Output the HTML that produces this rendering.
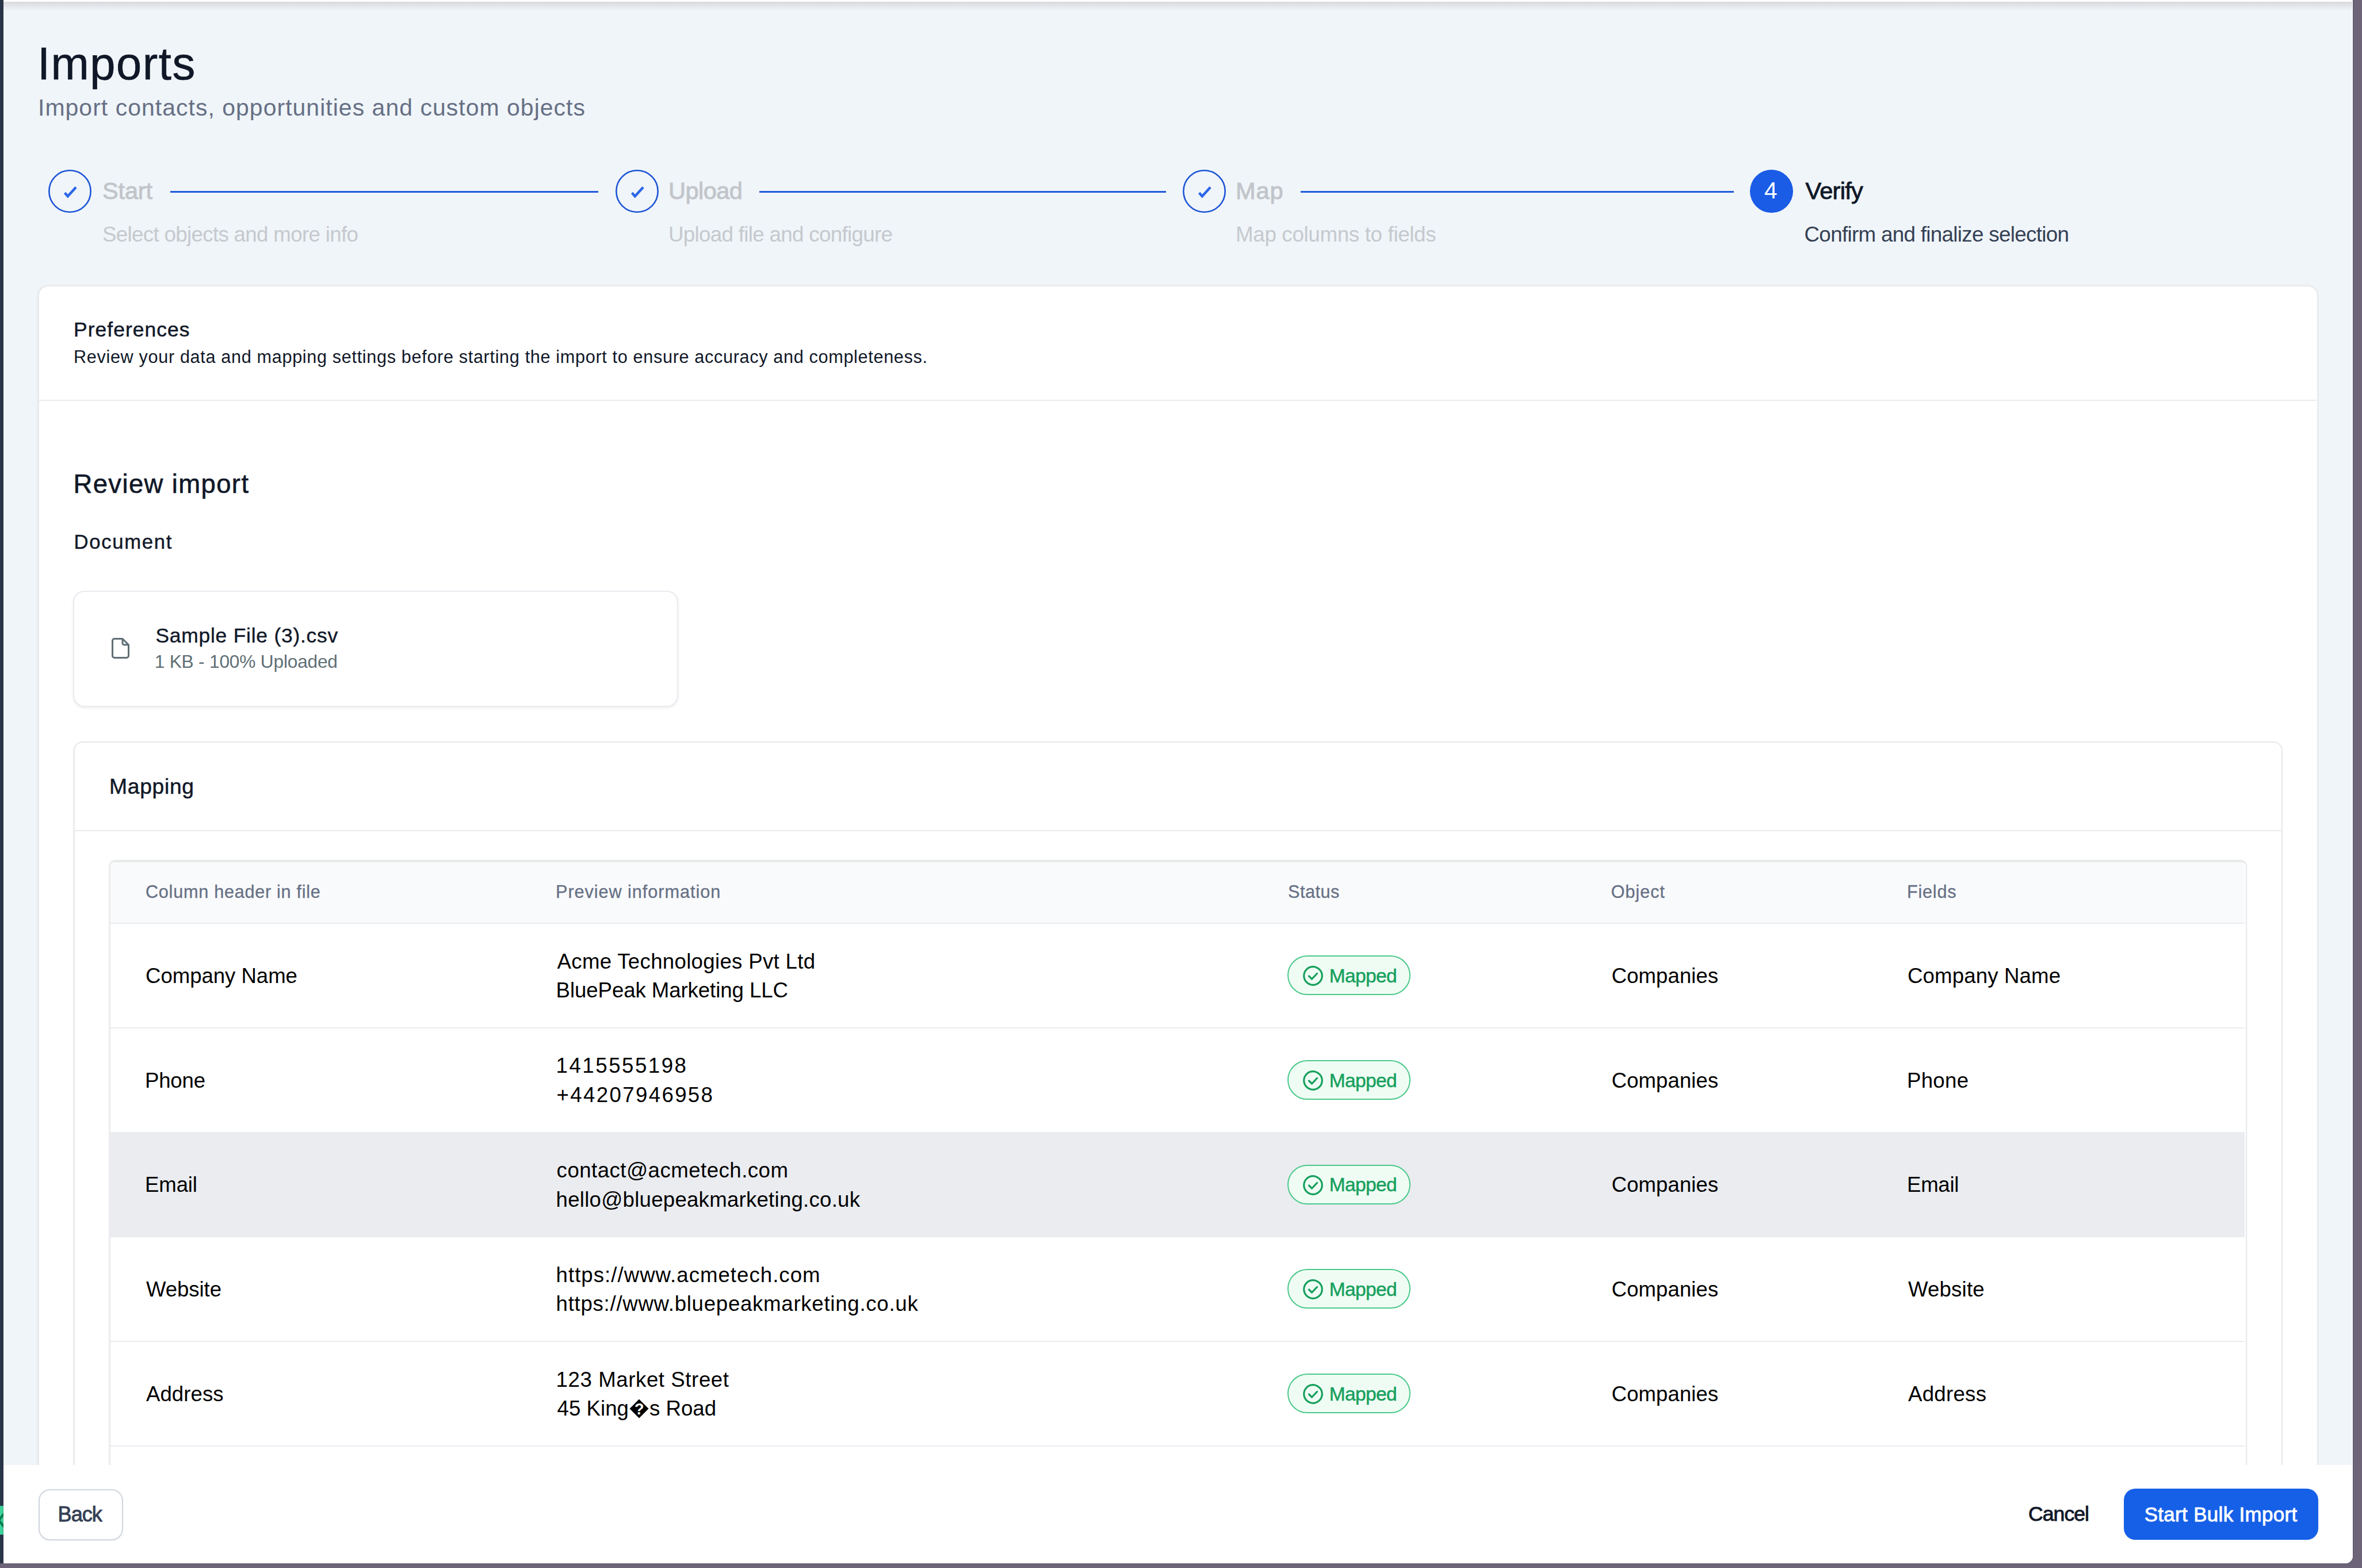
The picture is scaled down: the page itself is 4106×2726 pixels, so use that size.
<!DOCTYPE html>
<html><head><meta charset="utf-8"><style>
html,body{margin:0;padding:0}
body{width:4106px;height:2726px;overflow:hidden;position:relative;background:#6e6479;font-family:"Liberation Sans",sans-serif}
.t{position:absolute;white-space:nowrap}
.rc{display:inline-block;width:34px;height:34px;vertical-align:-4.5px;margin:0 1px}
.rc svg{display:block}
.circ{position:absolute;width:74px;height:74px}
.card{position:absolute;background:#fff;border:2px solid #e8e9eb;box-shadow:-1px 1px 4px rgba(0,0,0,.05)}
.card2{position:absolute;background:#fff;border:2px solid #e9ebef;box-shadow:0 2px 4px rgba(16,24,40,.08)}
.tbl{position:absolute;background:#fff;border:2px solid #e8e9eb;border-top-width:4px;box-shadow:-1px 1px 4px rgba(0,0,0,.05)}
.badge{position:absolute;width:210px;height:65px;border:2px solid #4cc98a;border-radius:36px;background:#effcf4}
#leftstrip{position:absolute;left:0;top:0;width:6px;height:2718px;background:#2b3548}
#modal{position:absolute;left:6px;top:0;width:4084px;height:2718px;background:#fff;border-radius:0 0 13px 0;overflow:hidden;box-shadow:0 0 0 1px rgba(20,20,40,.22)}
#scroll{position:absolute;left:-6px;top:3px;width:4089px;height:2544px;background:#f0f5f9;overflow:hidden}
#scroll > .inner{position:absolute;left:0;top:-3px;width:4106px;height:2726px}
#shadow{position:absolute;left:0;top:0;width:4106px;height:16px;background:linear-gradient(#d8d9de,rgba(240,245,249,0));z-index:5}
#footer{position:absolute;left:0;top:2547px;width:4084px;height:171px;background:#fff}
.btn{position:absolute;box-sizing:border-box}
</style></head><body>
<div id="leftstrip"></div>
<div style="position:absolute;left:0;top:2618px;width:6px;height:50px;background:#3dd39a;overflow:hidden"><svg width="6" height="50" style="position:absolute;left:0;top:0"><path d="M6.5 14 L-2 25 L6.5 36" fill="none" stroke="#0a7a4c" stroke-width="4" stroke-linecap="round" stroke-linejoin="round"/></svg></div>
<div id="modal">
 <div id="scroll"><div id="shadow"></div><div class="inner">
<div class="t" id="title" style="left:65.0px;top:61.26px;font-size:79.50px;line-height:99.38px;color:#101828;font-weight:400;letter-spacing:1.513px;-webkit-text-stroke:0.7px #101828;">Imports</div>
<div class="t" id="subtitle" style="left:66.0px;top:161.68px;font-size:40.99px;line-height:51.24px;color:#667085;font-weight:400;letter-spacing:1.018px;">Import contacts, opportunities and custom objects</div>
<svg style="position:absolute;left:83.8px;top:295.4px" width="75" height="75" viewBox="0 0 75 75"><circle cx="37.5" cy="37.5" r="36.2" fill="none" stroke="#1d55d6" stroke-width="2.6"/><path d="M28.6 40.2 L33.8 46.2 L48.1 30.6" fill="none" stroke="#2a66e8" stroke-width="4.4" stroke-linejoin="miter"/></svg>
<div class="t" id="s0t" style="left:178.0px;top:305.62px;font-size:41.57px;line-height:51.96px;color:#c1c5ca;font-weight:400;letter-spacing:-0.176px;-webkit-text-stroke:0.9px #c1c5ca;">Start</div>
<div class="t" id="s0d" style="left:178.0px;top:384.57px;font-size:36.77px;line-height:45.97px;color:#c5c9ce;font-weight:400;letter-spacing:-0.701px;">Select objects and more info</div>
<svg style="position:absolute;left:1069.8px;top:295.4px" width="75" height="75" viewBox="0 0 75 75"><circle cx="37.5" cy="37.5" r="36.2" fill="none" stroke="#1d55d6" stroke-width="2.6"/><path d="M28.6 40.2 L33.8 46.2 L48.1 30.6" fill="none" stroke="#2a66e8" stroke-width="4.4" stroke-linejoin="miter"/></svg>
<div class="t" id="s1t" style="left:1162.0px;top:305.62px;font-size:41.57px;line-height:51.96px;color:#c1c5ca;font-weight:400;letter-spacing:-0.569px;-webkit-text-stroke:0.9px #c1c5ca;">Upload</div>
<div class="t" id="s1d" style="left:1162.0px;top:384.57px;font-size:36.77px;line-height:45.97px;color:#c5c9ce;font-weight:400;letter-spacing:-0.698px;">Upload file and configure</div>
<svg style="position:absolute;left:2055.8px;top:295.4px" width="75" height="75" viewBox="0 0 75 75"><circle cx="37.5" cy="37.5" r="36.2" fill="none" stroke="#1d55d6" stroke-width="2.6"/><path d="M28.6 40.2 L33.8 46.2 L48.1 30.6" fill="none" stroke="#2a66e8" stroke-width="4.4" stroke-linejoin="miter"/></svg>
<div class="t" id="s2t" style="left:2148.0px;top:305.62px;font-size:41.57px;line-height:51.96px;color:#c1c5ca;font-weight:400;letter-spacing:0.938px;-webkit-text-stroke:0.9px #c1c5ca;">Map</div>
<div class="t" id="s2d" style="left:2148.0px;top:384.57px;font-size:36.77px;line-height:45.97px;color:#c5c9ce;font-weight:400;letter-spacing:-0.348px;">Map columns to fields</div>
<div style="position:absolute;left:296px;top:332px;width:744px;height:3px;background:#1f5ad9"></div>
<div style="position:absolute;left:1320px;top:332px;width:707px;height:3px;background:#1f5ad9"></div>
<div style="position:absolute;left:2261px;top:332px;width:753px;height:3px;background:#1f5ad9"></div>
<div class="circ" style="left:3041.7px;top:295.4px;width:75px;height:75px;border-radius:50%;background:#1a5ce6"></div>
<div class="t" id="s3n" style="left:3067.0px;top:306.46px;font-size:40.70px;line-height:50.87px;color:#ffffff;font-weight:400;letter-spacing:9.359px;">4</div>
<div class="t" id="s3t" style="left:3138.5px;top:305.62px;font-size:41.57px;line-height:51.96px;color:#101828;font-weight:400;letter-spacing:-0.747px;-webkit-text-stroke:0.9px #101828;">Verify</div>
<div class="t" id="s3d" style="left:3136.5px;top:384.57px;font-size:36.77px;line-height:45.97px;color:#344054;font-weight:400;letter-spacing:-0.680px;">Confirm and finalize selection</div>
<div class="card" style="left:66px;top:496px;width:3960px;height:2200px;border-radius:18px"></div>
<div style="position:absolute;left:68px;top:695px;width:3958px;height:2px;background:#e9ebef"></div>
<div class="t" id="prefT" style="left:128.0px;top:551.37px;font-size:35.44px;line-height:44.3px;color:#101828;font-weight:400;letter-spacing:1.052px;-webkit-text-stroke:0.5px #101828;">Preferences</div>
<div class="t" id="prefD" style="left:128.0px;top:600.90px;font-size:30.67px;line-height:38.34px;color:#101828;font-weight:400;letter-spacing:0.645px;">Review your data and mapping settings before starting the import to ensure accuracy and completeness.</div>
<div class="t" id="revT" style="left:127.5px;top:814.01px;font-size:45.49px;line-height:56.86px;color:#101828;font-weight:400;letter-spacing:1.365px;-webkit-text-stroke:0.6px #101828;">Review import</div>
<div class="t" id="docT" style="left:128.5px;top:920.85px;font-size:34.74px;line-height:43.43px;color:#101828;font-weight:400;letter-spacing:1.663px;-webkit-text-stroke:0.4px #101828;">Document</div>
<div class="card2" style="left:127px;top:1027px;width:1048px;height:198px;border-radius:20px"></div>
<svg style="position:absolute;left:193px;top:1107px" width="34" height="40" viewBox="0 0 34 40"><path d="M6 3.5 H20 L30.5 14 V33 a3.5 3.5 0 0 1 -3.5 3.5 H6 a3.5 3.5 0 0 1 -3.5 -3.5 V7 a3.5 3.5 0 0 1 3.5 -3.5 Z M20 3.5 V11 a3 3 0 0 0 3 3 H30.5" fill="none" stroke="#5f6e74" stroke-width="3" stroke-linejoin="round"/></svg>
<div class="t" id="fileN" style="left:270.4px;top:1082.97px;font-size:35.44px;line-height:44.3px;color:#101828;font-weight:400;letter-spacing:0.764px;-webkit-text-stroke:0.4px #101828;">Sample File (3).csv</div>
<div class="t" id="fileS" style="left:268.7px;top:1130.62px;font-size:31.69px;line-height:39.61px;color:#5f6f75;font-weight:400;letter-spacing:-0.214px;">1 KB - 100% Uploaded</div>
<div class="card" style="left:128px;top:1289.3px;width:3836px;height:1400px;border-radius:16px"></div>
<div style="position:absolute;left:130px;top:1443px;width:3836px;height:2px;background:#e9ebef"></div>
<div class="t" id="mapT" style="left:190.0px;top:1343.51px;font-size:37.26px;line-height:46.57px;color:#101828;font-weight:400;letter-spacing:0.696px;-webkit-text-stroke:0.5px #101828;">Mapping</div>
<div class="tbl" style="left:190px;top:1495px;width:3712px;height:1200px;border-radius:10px"></div>
<div style="position:absolute;left:192px;top:1499px;width:3710px;height:105px;background:#f9fafb;border-radius:6px 6px 0 0"></div>
<div style="position:absolute;left:192px;top:1604px;width:3710px;height:2px;background:#eaecf0"></div>
<div class="t" id="h1" style="left:253.0px;top:1532.18px;font-size:30.70px;line-height:38.37px;color:#667085;font-weight:400;letter-spacing:0.695px;-webkit-text-stroke:0.3px #667085;">Column header in file</div>
<div class="t" id="h2" style="left:966.0px;top:1532.18px;font-size:30.70px;line-height:38.37px;color:#667085;font-weight:400;letter-spacing:0.931px;-webkit-text-stroke:0.3px #667085;">Preview information</div>
<div class="t" id="h3" style="left:2239.0px;top:1532.18px;font-size:30.70px;line-height:38.37px;color:#667085;font-weight:400;letter-spacing:0.472px;-webkit-text-stroke:0.3px #667085;">Status</div>
<div class="t" id="h4" style="left:2800.5px;top:1532.18px;font-size:30.70px;line-height:38.37px;color:#667085;font-weight:400;letter-spacing:0.919px;-webkit-text-stroke:0.3px #667085;">Object</div>
<div class="t" id="h5" style="left:3315.0px;top:1532.18px;font-size:30.70px;line-height:38.37px;color:#667085;font-weight:400;letter-spacing:0.744px;-webkit-text-stroke:0.3px #667085;">Fields</div>
<div style="position:absolute;left:192px;top:1785.8px;width:3710px;height:2px;background:#eaecf0"></div>
<div class="t" id="r0c1" style="left:253.0px;top:1673.72px;font-size:36.63px;line-height:45.78px;color:#000000;font-weight:400;letter-spacing:-0.057px;">Company Name</div>
<div class="t" id="r0p1" style="left:968.6px;top:1648.52px;font-size:36.63px;line-height:45.78px;color:#000000;font-weight:400;letter-spacing:0.305px;">Acme Technologies Pvt Ltd</div>
<div class="t" id="r0p2" style="left:966.6px;top:1698.92px;font-size:36.63px;line-height:45.78px;color:#000000;font-weight:400;letter-spacing:-0.085px;">BluePeak Marketing LLC</div>
<div class="badge" style="left:2238px;top:1660.9px"><svg style="position:absolute;left:24px;top:15px" width="37" height="37" viewBox="0 0 37 37"><circle cx="18.5" cy="18.5" r="15.8" fill="none" stroke="#17a05d" stroke-width="3.2"/><path d="M11.5 19 L16.5 24 L25.5 14.5" fill="none" stroke="#17a05d" stroke-width="3.2" stroke-linecap="round" stroke-linejoin="round"/></svg></div>
<div class="t" id="r0m" style="left:2310.7px;top:1675.87px;font-size:33.49px;line-height:41.86px;color:#17a05d;font-weight:400;letter-spacing:-0.606px;-webkit-text-stroke:0.5px #17a05d;">Mapped</div>
<div class="t" id="r0o" style="left:2801.4px;top:1673.72px;font-size:36.63px;line-height:45.78px;color:#000000;font-weight:400;letter-spacing:0.042px;">Companies</div>
<div class="t" id="r0f" style="left:3316.0px;top:1673.72px;font-size:36.63px;line-height:45.78px;color:#000000;font-weight:400;letter-spacing:0.125px;">Company Name</div>
<div style="position:absolute;left:192px;top:1967.6px;width:3710px;height:2px;background:#eaecf0"></div>
<div class="t" id="r1c1" style="left:252.0px;top:1855.52px;font-size:36.63px;line-height:45.78px;color:#000000;font-weight:400;letter-spacing:-0.227px;">Phone</div>
<div class="t" id="r1p1" style="left:966.6px;top:1830.32px;font-size:36.63px;line-height:45.78px;color:#000000;font-weight:400;letter-spacing:2.520px;">1415555198</div>
<div class="t" id="r1p2" style="left:967.6px;top:1880.72px;font-size:36.63px;line-height:45.78px;color:#000000;font-weight:400;letter-spacing:2.356px;">+44207946958</div>
<div class="badge" style="left:2238px;top:1842.7px"><svg style="position:absolute;left:24px;top:15px" width="37" height="37" viewBox="0 0 37 37"><circle cx="18.5" cy="18.5" r="15.8" fill="none" stroke="#17a05d" stroke-width="3.2"/><path d="M11.5 19 L16.5 24 L25.5 14.5" fill="none" stroke="#17a05d" stroke-width="3.2" stroke-linecap="round" stroke-linejoin="round"/></svg></div>
<div class="t" id="r1m" style="left:2310.7px;top:1857.67px;font-size:33.49px;line-height:41.86px;color:#17a05d;font-weight:400;letter-spacing:-0.606px;-webkit-text-stroke:0.5px #17a05d;">Mapped</div>
<div class="t" id="r1o" style="left:2801.4px;top:1855.52px;font-size:36.63px;line-height:45.78px;color:#000000;font-weight:400;letter-spacing:0.042px;">Companies</div>
<div class="t" id="r1f" style="left:3315.0px;top:1855.52px;font-size:36.63px;line-height:45.78px;color:#000000;font-weight:400;letter-spacing:0.273px;">Phone</div>
<div style="position:absolute;left:192px;top:1967.6px;width:3710px;height:183.8px;background:#eaecf0"></div>
<div class="t" id="r2c1" style="left:252.0px;top:2037.32px;font-size:36.63px;line-height:45.78px;color:#000000;font-weight:400;letter-spacing:-0.148px;">Email</div>
<div class="t" id="r2p1" style="left:967.6px;top:2012.12px;font-size:36.63px;line-height:45.78px;color:#000000;font-weight:400;letter-spacing:0.471px;">contact@acmetech.com</div>
<div class="t" id="r2p2" style="left:966.6px;top:2062.52px;font-size:36.63px;line-height:45.78px;color:#000000;font-weight:400;letter-spacing:0.238px;">hello@bluepeakmarketing.co.uk</div>
<div class="badge" style="left:2238px;top:2024.5px"><svg style="position:absolute;left:24px;top:15px" width="37" height="37" viewBox="0 0 37 37"><circle cx="18.5" cy="18.5" r="15.8" fill="none" stroke="#17a05d" stroke-width="3.2"/><path d="M11.5 19 L16.5 24 L25.5 14.5" fill="none" stroke="#17a05d" stroke-width="3.2" stroke-linecap="round" stroke-linejoin="round"/></svg></div>
<div class="t" id="r2m" style="left:2310.7px;top:2039.47px;font-size:33.49px;line-height:41.86px;color:#17a05d;font-weight:400;letter-spacing:-0.606px;-webkit-text-stroke:0.5px #17a05d;">Mapped</div>
<div class="t" id="r2o" style="left:2801.4px;top:2037.32px;font-size:36.63px;line-height:45.78px;color:#000000;font-weight:400;letter-spacing:0.042px;">Companies</div>
<div class="t" id="r2f" style="left:3315.0px;top:2037.32px;font-size:36.63px;line-height:45.78px;color:#000000;font-weight:400;letter-spacing:-0.298px;">Email</div>
<div style="position:absolute;left:192px;top:2331.2px;width:3710px;height:2px;background:#eaecf0"></div>
<div class="t" id="r3c1" style="left:254.0px;top:2219.12px;font-size:36.63px;line-height:45.78px;color:#000000;font-weight:400;letter-spacing:-0.106px;">Website</div>
<div class="t" id="r3p1" style="left:966.6px;top:2193.92px;font-size:36.63px;line-height:45.78px;color:#000000;font-weight:400;letter-spacing:1.018px;">https://www.acmetech.com</div>
<div class="t" id="r3p2" style="left:966.6px;top:2244.32px;font-size:36.63px;line-height:45.78px;color:#000000;font-weight:400;letter-spacing:0.720px;">https://www.bluepeakmarketing.co.uk</div>
<div class="badge" style="left:2238px;top:2206.3px"><svg style="position:absolute;left:24px;top:15px" width="37" height="37" viewBox="0 0 37 37"><circle cx="18.5" cy="18.5" r="15.8" fill="none" stroke="#17a05d" stroke-width="3.2"/><path d="M11.5 19 L16.5 24 L25.5 14.5" fill="none" stroke="#17a05d" stroke-width="3.2" stroke-linecap="round" stroke-linejoin="round"/></svg></div>
<div class="t" id="r3m" style="left:2310.7px;top:2221.27px;font-size:33.49px;line-height:41.86px;color:#17a05d;font-weight:400;letter-spacing:-0.606px;-webkit-text-stroke:0.5px #17a05d;">Mapped</div>
<div class="t" id="r3o" style="left:2801.4px;top:2219.12px;font-size:36.63px;line-height:45.78px;color:#000000;font-weight:400;letter-spacing:0.042px;">Companies</div>
<div class="t" id="r3f" style="left:3317.0px;top:2219.12px;font-size:36.63px;line-height:45.78px;color:#000000;font-weight:400;letter-spacing:0.158px;">Website</div>
<div style="position:absolute;left:192px;top:2513.0px;width:3710px;height:2px;background:#eaecf0"></div>
<div class="t" id="r4c1" style="left:254.0px;top:2400.92px;font-size:36.63px;line-height:45.78px;color:#000000;font-weight:400;letter-spacing:0.038px;">Address</div>
<div class="t" id="r4p1" style="left:966.6px;top:2375.72px;font-size:36.63px;line-height:45.78px;color:#000000;font-weight:400;letter-spacing:0.579px;">123 Market Street</div>
<div class="t" id="r4p2" style="left:968.6px;top:2426.12px;font-size:36.63px;line-height:45.78px;color:#000000;font-weight:400;letter-spacing:0.012px;">45 King<span class="rc"><svg width="34" height="34" viewBox="0 0 34 34"><path d="M17 0.5L33.5 17L17 33.5L0.5 17Z" fill="#000"/><text x="17.2" y="27" font-family="Liberation Sans" font-weight="700" font-size="27" fill="#fff" text-anchor="middle">?</text></svg></span>s Road</div>
<div class="badge" style="left:2238px;top:2388.1px"><svg style="position:absolute;left:24px;top:15px" width="37" height="37" viewBox="0 0 37 37"><circle cx="18.5" cy="18.5" r="15.8" fill="none" stroke="#17a05d" stroke-width="3.2"/><path d="M11.5 19 L16.5 24 L25.5 14.5" fill="none" stroke="#17a05d" stroke-width="3.2" stroke-linecap="round" stroke-linejoin="round"/></svg></div>
<div class="t" id="r4m" style="left:2310.7px;top:2403.07px;font-size:33.49px;line-height:41.86px;color:#17a05d;font-weight:400;letter-spacing:-0.606px;-webkit-text-stroke:0.5px #17a05d;">Mapped</div>
<div class="t" id="r4o" style="left:2801.4px;top:2400.92px;font-size:36.63px;line-height:45.78px;color:#000000;font-weight:400;letter-spacing:0.042px;">Companies</div>
<div class="t" id="r4f" style="left:3317.0px;top:2400.92px;font-size:36.63px;line-height:45.78px;color:#000000;font-weight:400;letter-spacing:0.274px;">Address</div>
 </div></div>
 <div id="footer">
  <div class="btn" style="left:60.6px;top:41.7px;width:147px;height:89px;border:2px solid #d0d5dd;border-radius:20px;box-shadow:0 1px 2px rgba(16,24,40,.05)"></div>
  <div class="t" id="back" style="left:94.6px;top:62.69px;font-size:36.14px;line-height:45.17px;color:#344054;font-weight:400;letter-spacing:-1.033px;-webkit-text-stroke:0.9px #344054;">Back</div>
  <div class="t" id="cancel" style="left:3520.0px;top:62.93px;font-size:35.58px;line-height:44.48px;color:#101828;font-weight:400;letter-spacing:-0.960px;-webkit-text-stroke:0.9px #101828;">Cancel</div>
  <div class="btn" style="left:3686.3px;top:41.1px;width:338px;height:89.4px;background:#1660e8;border-radius:20px"></div>
  <div class="t" id="start" style="left:3721.7px;top:63.61px;font-size:34.88px;line-height:43.6px;color:#ffffff;font-weight:400;letter-spacing:0.360px;-webkit-text-stroke:0.9px #ffffff;">Start Bulk Import</div>
 </div>
</div>
</body></html>
